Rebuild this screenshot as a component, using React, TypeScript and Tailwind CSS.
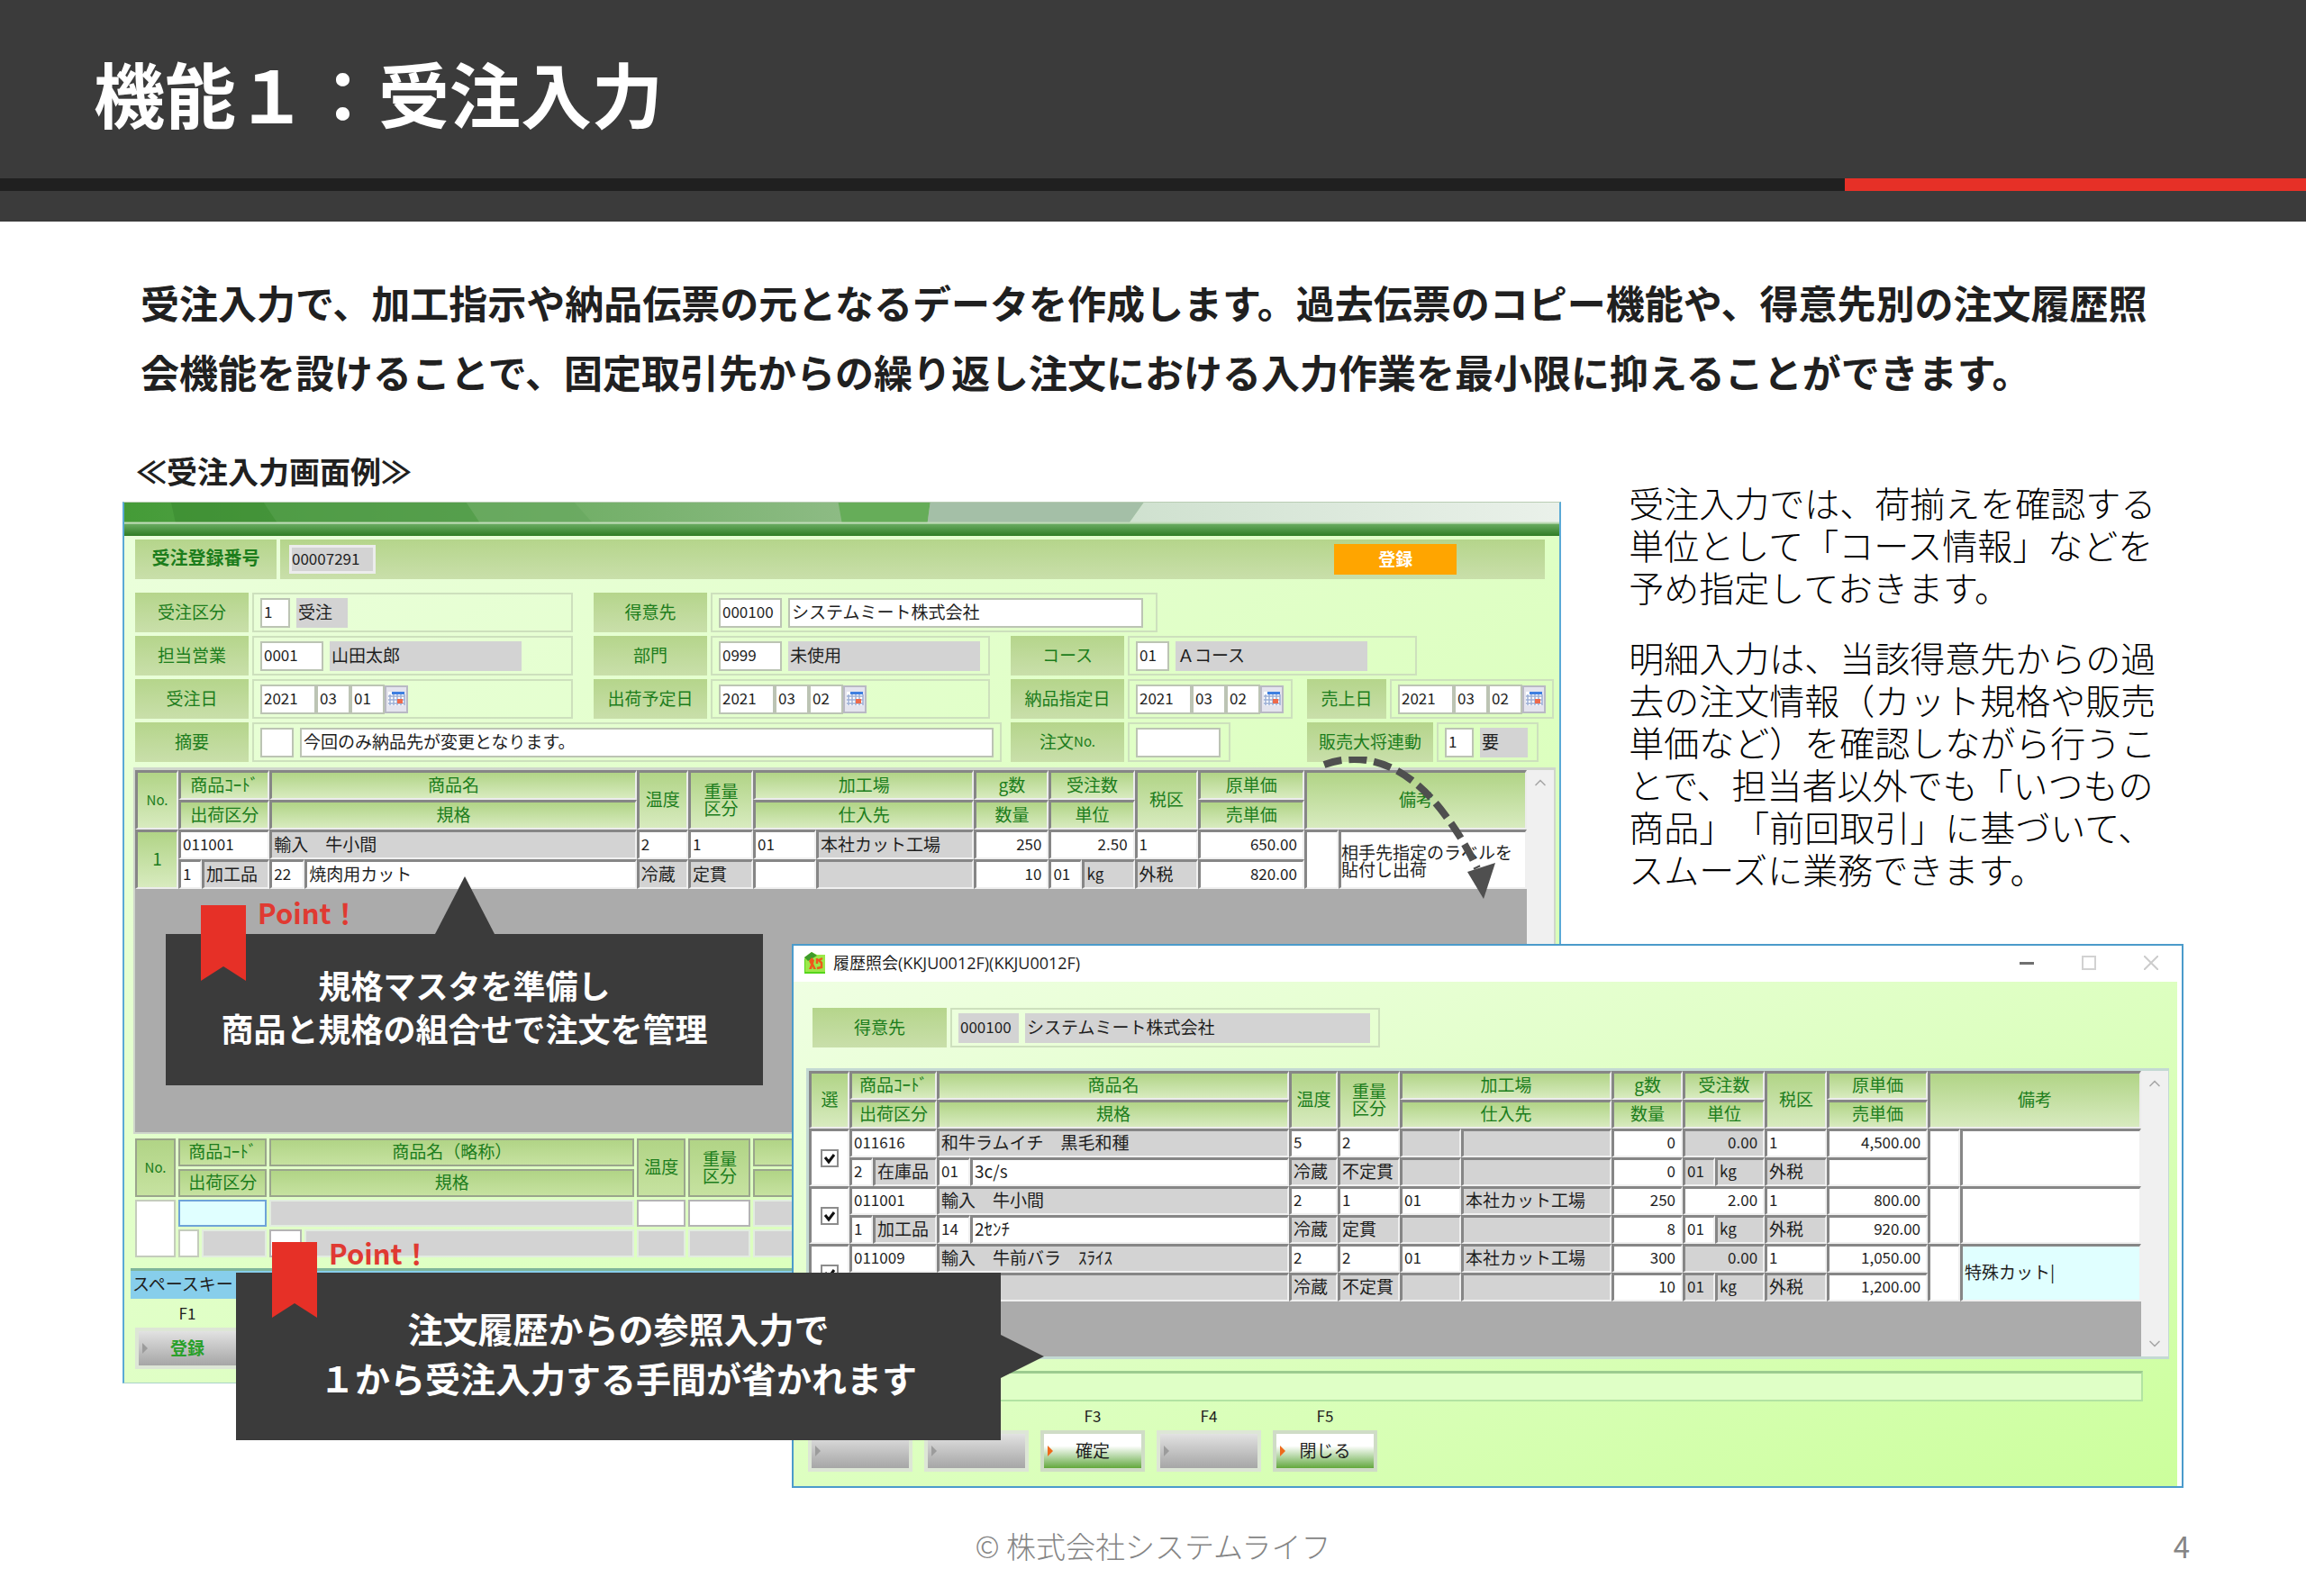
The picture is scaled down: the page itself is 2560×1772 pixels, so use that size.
import type { ReactNode } from "react";
import clsx from "clsx";
import { ChevronDown, ChevronUp } from "lucide-react";

type OrderLine = {
  code: string;
  name: string;
  shipCode: string;
  shipName: string;
  specCode: string;
  specName: string;
  temp: string;
  tempName: string;
  weight: string;
  weightName: string;
  factoryCode: string;
  factory: string;
  grams: string;
  amount: string;
  qty: string;
  unitCode: string;
  unit: string;
  tax: string;
  taxName: string;
  cost: string;
  price: string;
  note: ReactNode;
  // keys of the cells that are locked and shown in grey
  locked: string[];
};

const orderLines: OrderLine[] = [
  {
    code: "011001",
    name: "輸入　牛小間",
    shipCode: "1",
    shipName: "加工品",
    specCode: "22",
    specName: "焼肉用カット",
    temp: "2",
    tempName: "冷蔵",
    weight: "1",
    weightName: "定貫",
    factoryCode: "01",
    factory: "本社カット工場",
    grams: "250",
    amount: "10",
    qty: "2.50",
    unitCode: "01",
    unit: "kg",
    tax: "1",
    taxName: "外税",
    cost: "650.00",
    price: "820.00",
    note: (
      <>
        相手先指定のラベルを
        <br />
        貼付し出荷
      </>
    ),
    locked: [],
  },
];

const historyLines: OrderLine[] = [
  {
    code: "011616",
    name: "和牛ラムイチ　黒毛和種",
    shipCode: "2",
    shipName: "在庫品",
    specCode: "01",
    specName: "3c/s",
    temp: "5",
    tempName: "冷蔵",
    weight: "2",
    weightName: "不定貫",
    factoryCode: "",
    factory: "",
    grams: "0",
    amount: "0",
    qty: "0.00",
    unitCode: "01",
    unit: "kg",
    tax: "1",
    taxName: "外税",
    cost: "4,500.00",
    price: "",
    note: "",
    locked: ["factoryCode", "supplierCode", "qty", "unitCode"],
  },
  {
    code: "011001",
    name: "輸入　牛小間",
    shipCode: "1",
    shipName: "加工品",
    specCode: "14",
    specName: "2ｾﾝﾁ",
    temp: "2",
    tempName: "冷蔵",
    weight: "1",
    weightName: "定貫",
    factoryCode: "01",
    factory: "本社カット工場",
    grams: "250",
    amount: "8",
    qty: "2.00",
    unitCode: "01",
    unit: "kg",
    tax: "1",
    taxName: "外税",
    cost: "800.00",
    price: "920.00",
    note: "",
    locked: ["supplierCode"],
  },
  {
    code: "011009",
    name: "輸入　牛前バラ　ｽﾗｲｽ",
    shipCode: "",
    shipName: "",
    specCode: "",
    specName: "",
    temp: "2",
    tempName: "冷蔵",
    weight: "2",
    weightName: "不定貫",
    factoryCode: "01",
    factory: "本社カット工場",
    grams: "300",
    amount: "10",
    qty: "0.00",
    unitCode: "01",
    unit: "kg",
    tax: "1",
    taxName: "外税",
    cost: "1,050.00",
    price: "1,200.00",
    note: (
      <input
        aria-label="備考"
        defaultValue="特殊カット|"
        className="h-full w-full bg-[#e0ffff] px-0.5 pb-1 text-[19px] outline-none"
      />
    ),
    locked: ["supplierCode", "specCode", "specName", "qty", "unitCode"],
  },
];

const orderCols = [48, 26, 75, 39, 368, 57, 72, 70, 175, 83, 37, 58, 70, 118, 38, 209];
const historyCols = [45, 26, 71, 37, 354, 54, 69, 68, 167, 79, 36, 55, 69, 112, 36, 201];

function Cols({ widths, less = 0 }: { widths: number[]; less?: number }) {
  return (
    <colgroup>
      {widths.map((w, i) => (
        <col key={i} style={{ width: w - less }} />
      ))}
    </colgroup>
  );
}

function HeadCell({
  children,
  flat,
  ...span
}: {
  children?: ReactNode;
  flat?: boolean;
  colSpan?: number;
  rowSpan?: number;
}) {
  return (
    <th
      {...span}
      className={clsx(
        "overflow-hidden bg-linear-to-b from-[#b1d486] px-0 pt-0 pb-1 text-center align-middle text-[19px] leading-[19px] font-normal whitespace-nowrap text-[#1c7d1c]",
        flat
          ? "to-[#c6e2a0] border-2 border-[#9aa58c]"
          : "to-[#d8ebbf] border-t-3 border-r-2 border-b-2 border-l-3 border-t-[#868686] border-r-[#ececec] border-b-[#ececec] border-l-[#868686]",
      )}
    >
      {children}
    </th>
  );
}

function GridHead({
  first,
  name = "商品名",
  height,
  flat,
}: {
  first: ReactNode;
  name?: string;
  height: string;
  flat?: boolean;
}) {
  return (
    <thead>
      <tr className={height}>
        <HeadCell flat={flat} rowSpan={2}>{first}</HeadCell>
        <HeadCell flat={flat} colSpan={2}>商品ｺｰﾄﾞ</HeadCell>
        <HeadCell flat={flat} colSpan={2}>{name}</HeadCell>
        <HeadCell flat={flat} rowSpan={2}>温度</HeadCell>
        <HeadCell flat={flat} rowSpan={2}>
          重量
          <br />
          区分
        </HeadCell>
        <HeadCell flat={flat} colSpan={2}>{!flat && "加工場"}</HeadCell>
        <HeadCell flat={flat}>{!flat && "g数"}</HeadCell>
        <HeadCell flat={flat} colSpan={2}>{!flat && "受注数"}</HeadCell>
        <HeadCell flat={flat} rowSpan={2}>{!flat && "税区"}</HeadCell>
        <HeadCell flat={flat}>{!flat && "原単価"}</HeadCell>
        <HeadCell flat={flat} rowSpan={2} colSpan={2}>{!flat && "備考"}</HeadCell>
      </tr>
      <tr className={height}>
        <HeadCell flat={flat} colSpan={2}>出荷区分</HeadCell>
        <HeadCell flat={flat} colSpan={2}>規格</HeadCell>
        <HeadCell flat={flat} colSpan={2}>{!flat && "仕入先"}</HeadCell>
        <HeadCell flat={flat}>{!flat && "数量"}</HeadCell>
        <HeadCell flat={flat} colSpan={2}>{!flat && "単位"}</HeadCell>
        <HeadCell flat={flat}>{!flat && "売単価"}</HeadCell>
      </tr>
    </thead>
  );
}

function Cell({
  children,
  grey,
  num,
  right,
  pad = "px-0.5 pb-1",
  ...span
}: {
  children?: ReactNode;
  grey?: boolean;
  num?: boolean;
  right?: boolean;
  pad?: string;
  colSpan?: number;
  rowSpan?: number;
}) {
  return (
    <td
      {...span}
      className={clsx(
        "overflow-hidden border-t-3 border-r-2 border-b-2 border-l-3 border-t-[#868686] border-r-[#f0f0f0] border-b-[#f0f0f0] border-l-[#868686] pt-0 align-middle leading-[19px] whitespace-nowrap",
        right ? "pr-1.5 pb-1 text-right" : pad,
        grey ? "bg-[#d3d3d3]" : "bg-white",
        num ? "text-[17px]" : "text-[19px]",
      )}
    >
      {children}
    </td>
  );
}

function LineRows({ line, head, height }: { line: OrderLine; head: ReactNode; height: string }) {
  const locked = (key: string) => line.locked.includes(key);
  return (
    <>
      <tr className={height}>
        {head}
        <Cell num colSpan={2}>{line.code}</Cell>
        <Cell grey colSpan={2}>{line.name}</Cell>
        <Cell num>{line.temp}</Cell>
        <Cell num>{line.weight}</Cell>
        <Cell num grey={locked("factoryCode")}>{line.factoryCode}</Cell>
        <Cell grey>{line.factory}</Cell>
        <Cell num right>{line.grams}</Cell>
        <Cell num right grey={locked("qty")} colSpan={2}>{line.qty}</Cell>
        <Cell num>{line.tax}</Cell>
        <Cell num right>{line.cost}</Cell>
        <Cell rowSpan={2} />
        <Cell rowSpan={2} pad="px-0 h-px">{line.note}</Cell>
      </tr>
      <tr className={height}>
        <Cell num>{line.shipCode}</Cell>
        <Cell grey>{line.shipName}</Cell>
        <Cell num grey={locked("specCode")}>{line.specCode}</Cell>
        <Cell grey={locked("specName")}>{line.specName}</Cell>
        <Cell grey>{line.tempName}</Cell>
        <Cell grey>{line.weightName}</Cell>
        <Cell grey={locked("supplierCode")} />
        <Cell grey />
        <Cell num right>{line.amount}</Cell>
        <Cell num grey={locked("unitCode")}>{line.unitCode}</Cell>
        <Cell num grey>{line.unit}</Cell>
        <Cell grey>{line.taxName}</Cell>
        <Cell num right>{line.price}</Cell>
      </tr>
    </>
  );
}

function ScrollBar({ down }: { down?: boolean }) {
  return (
    <div className="flex w-[30px] shrink-0 flex-col items-center justify-between bg-[#f0f0f0] py-1">
      <ChevronUp className="size-5 text-[#a8a8a8]" />
      {down && <ChevronDown className="size-5 text-[#a8a8a8]" />}
    </div>
  );
}

function Caption({ children, htmlFor, width }: { children: ReactNode; htmlFor: string; width: string }) {
  return (
    <label
      htmlFor={htmlFor}
      className={clsx(
        "flex h-[44px] shrink-0 items-center justify-center bg-linear-to-b from-[#b5d58b] to-[#c9dfaa] pb-1 text-[19px] leading-[19px] whitespace-nowrap text-[#1c7d1c]",
        width,
      )}
    >
      {children}
    </label>
  );
}

function Field({ children, width }: { children: ReactNode; width: string }) {
  return (
    <div
      className={clsx(
        "ml-1 flex h-[44px] shrink-0 items-center gap-[7px] border-2 border-[#cde0bd] pl-[7px]",
        width,
      )}
    >
      {children}
    </div>
  );
}

function Box({
  id,
  value = "",
  label,
  width,
  grey,
  text,
}: {
  id?: string;
  value?: string;
  label?: string;
  width: string;
  grey?: boolean;
  text?: boolean;
}) {
  return (
    <input
      id={id}
      aria-label={label}
      defaultValue={value}
      readOnly={grey}
      className={clsx(
        "h-[33px] shrink-0 rounded-none pb-1 outline-none",
        width,
        grey ? "bg-[#d3d3d3] px-0.5" : "border-2 border-[#bcc4b4] bg-white px-0.5",
        text ? "text-[19px]" : "text-[17px]",
      )}
    />
  );
}

function DateBox({ id, day }: { id: string; day: string }) {
  return (
    <div className="flex items-center">
      <Box id={id} value="2021" width="w-[62px]" />
      <Box value="03" label="月" width="w-[38px]" />
      <Box value={day} label="日" width="w-[38px]" />
      <button
        type="button"
        aria-label="カレンダー"
        className="flex h-[31px] w-[26px] items-center justify-center border-2 border-[#b9b9c4] bg-[#e4e4ee]"
      >
        <svg viewBox="0 0 20 20" className="size-5">
          <rect x="1" y="2" width="18" height="15" fill="#fff" />
          <rect x="5" y="2" width="14" height="3" fill="#3f7fe0" />
          <path d="M1 7H19M1 11H19M1 15H19M3 5V17M7 5V17M11 5V17M15 5V17M19 5V17" stroke="#9db0d6" strokeWidth="1.5" />
          <rect x="11" y="10" width="6" height="5" fill="#ee6a4c" />
        </svg>
      </button>
    </div>
  );
}

function KeyButton({
  keyName,
  hint,
  label,
  tone,
}: {
  keyName?: string;
  hint?: string;
  label?: string;
  tone: "grey" | "green" | "greyGreen";
}) {
  return (
    <div className="flex w-[116px] flex-col items-center gap-1">
      <span className="h-[24px] text-[17px] leading-[24px]">{keyName}</span>
      <button
        type="button"
        aria-label={label ?? hint ?? keyName}
        className={clsx(
          "relative h-[46px] w-full border-4 pb-1 text-[19px] leading-[19px]",
          tone === "green"
            ? "border-[#cfdcc6] bg-linear-to-b from-white from-35% to-[#63a83a]"
            : "border-[#dde6d6] bg-linear-to-b from-[#e2e2e2] to-[#a6a6a6]",
          tone === "greyGreen" && "font-bold text-[#2aa02a]",
        )}
      >
        <svg viewBox="0 0 6 12" className="absolute top-[13px] left-1 h-3 w-1.5">
          <path d="M0 0L6 6L0 12Z" fill={tone === "green" ? "#ee6a1c" : "#9c9c9c"} />
        </svg>
        {label}
      </button>
    </div>
  );
}

function TitleBanner() {
  return (
    <svg viewBox="0 0 1594 36" preserveAspectRatio="none" className="h-[37px] w-full">
      <defs>
        <linearGradient id="left" x1="0" x2="1" y1="0" y2="0">
          <stop offset="0" stopColor="#449b37" />
          <stop offset=".5" stopColor="#8dbb84" />
        </linearGradient>
        <linearGradient id="right" x1="0" x2="1" y1="0" y2="0">
          <stop offset="0" stopColor="#cfe1cf" />
          <stop offset="1" stopColor="#eaf1ea" />
        </linearGradient>
        <linearGradient id="rule" x1="0" x2="0" y1="0" y2="1">
          <stop offset="0" stopColor="#6aac62" />
          <stop offset="1" stopColor="#2f7d24" />
        </linearGradient>
      </defs>
      <rect width="1594" height="36" fill="url(#left)" />
      <path d="M52 0H155L170 22H57Z" fill="#3b8a30" opacity=".6" />
      <path d="M155 0H380L395 22H170Z" fill="#4f9a46" opacity=".7" />
      <path d="M380 0H500L520 22H395Z" fill="#68a860" opacity=".7" />
      <path d="M793 0H895L892 22H797Z" fill="#66ad59" />
      <path d="M895 0H1132L1116 22H892Z" fill="#a4bfa7" />
      <path d="M1132 0H1594V22H1116Z" fill="url(#right)" />
      <rect y="21" width="1594" height="3" fill="#c0dcb8" />
      <rect y="23" width="1594" height="13" fill="url(#rule)" />
    </svg>
  );
}

function OrderWindow() {
  return (
    <section className="border-x-2 border-t border-b border-x-[#5aa9d6] border-t-[#b9cdb4] border-b-[#a9d3c8] bg-linear-to-br from-[#ebffdc] to-[#d4ffae] pb-[15px] text-[#1e1e1e]">
      <TitleBanner />

      <div className="mt-[4px] mr-[16px] ml-[12px] flex h-[44px] items-center gap-1">
        <label
          htmlFor="order-no"
          className="flex h-full w-[157px] items-center justify-center bg-linear-to-b from-[#b5d58b] to-[#c9dfaa] pb-1 text-[20px] leading-[20px] font-bold text-[#1c7d1c]"
        >
          受注登録番号
        </label>
        <div className="flex h-full grow items-center bg-linear-to-b from-[#b5d58b] to-[#c9dfaa] pr-[98px] pl-[10px]">
          <input
            id="order-no"
            readOnly
            defaultValue="00007291"
            className="h-[32px] w-[96px] border-3 border-[#ececec] bg-[#d3d3d3] pb-1 text-[17px] outline-none"
          />
          <button
            type="button"
            className="ml-auto h-[34px] w-[136px] bg-[#ffa500] pb-1 text-[19px] leading-[19px] font-bold text-white"
          >
            登録
          </button>
        </div>
      </div>

      <div className="mt-[15px] ml-[12px] flex flex-col gap-1">
        <div className="flex">
          <Caption htmlFor="kind" width="w-[126px]">受注区分</Caption>
          <Field width="w-[356px]">
            <Box id="kind" value="1" width="w-[33px]" />
            <Box value="受注" label="受注区分名" width="w-[57px]" grey text />
          </Field>
          <div className="w-[23px]" />
          <Caption htmlFor="customer" width="w-[126px]">得意先</Caption>
          <Field width="w-[496px]">
            <Box id="customer" value="000100" width="w-[70px]" />
            <Box value="システムミート株式会社" label="得意先名" width="w-[394px]" text />
          </Field>
        </div>

        <div className="flex">
          <Caption htmlFor="staff" width="w-[126px]">担当営業</Caption>
          <Field width="w-[356px]">
            <Box id="staff" value="0001" width="w-[70px]" />
            <Box value="山田太郎" label="担当営業名" width="w-[213px]" grey text />
          </Field>
          <div className="w-[23px]" />
          <Caption htmlFor="dept" width="w-[126px]">部門</Caption>
          <Field width="w-[310px]">
            <Box id="dept" value="0999" width="w-[70px]" />
            <Box value="未使用" label="部門名" width="w-[213px]" grey text />
          </Field>
          <div className="w-[23px]" />
          <Caption htmlFor="course" width="w-[126px]">コース</Caption>
          <Field width="w-[321px]">
            <Box id="course" value="01" width="w-[37px]" />
            <Box value="Ａコース" label="コース名" width="w-[213px]" grey text />
          </Field>
        </div>

        <div className="flex">
          <Caption htmlFor="order-date" width="w-[126px]">受注日</Caption>
          <Field width="w-[356px]">
            <DateBox id="order-date" day="01" />
          </Field>
          <div className="w-[23px]" />
          <Caption htmlFor="ship-date" width="w-[126px]">出荷予定日</Caption>
          <Field width="w-[310px]">
            <DateBox id="ship-date" day="02" />
          </Field>
          <div className="w-[23px]" />
          <Caption htmlFor="due-date" width="w-[126px]">納品指定日</Caption>
          <Field width="w-[183px]">
            <DateBox id="due-date" day="02" />
          </Field>
          <div className="w-[16px]" />
          <Caption htmlFor="sales-date" width="w-[88px]">売上日</Caption>
          <Field width="w-[182px]">
            <DateBox id="sales-date" day="02" />
          </Field>
        </div>

        <div className="flex">
          <Caption htmlFor="memo" width="w-[126px]">摘要</Caption>
          <Field width="w-[832px]">
            <Box id="memo" width="w-[37px]" />
            <Box value="今回のみ納品先が変更となります。" label="摘要内容" width="w-[770px]" text />
          </Field>
          <div className="w-[10px]" />
          <Caption htmlFor="slip-no" width="w-[126px]">
            注文<span className="text-[15px]">No.</span>
          </Caption>
          <Field width="w-[114px]">
            <Box id="slip-no" width="w-[94px]" />
          </Field>
          <div className="w-[85px]" />
          <Caption htmlFor="link" width="w-[140px]">販売大将連動</Caption>
          <Field width="w-[113px]">
            <Box id="link" value="1" width="w-[32px]" />
            <Box value="要" label="連動区分" width="w-[53px]" grey text />
          </Field>
        </div>
      </div>

      <div className="mt-[6px] mr-[4px] ml-[10px] flex h-[407px] border-2 border-t-3 border-[#cfd6cb] bg-[#ababab]">
        <div className="grow">
          <table className="w-full table-fixed border-separate border-spacing-0">
            <Cols widths={orderCols} />
            <GridHead first={<span className="text-[15px]">No.</span>} height="h-[33px]" />
            <tbody>
              {orderLines.map((line, i) => (
                <LineRows
                  key={i}
                  line={line}
                  height="h-[33px]"
                  head={<HeadCell rowSpan={2}>{i + 1}</HeadCell>}
                />
              ))}
            </tbody>
          </table>
        </div>
        <ScrollBar />
      </div>

      <div className="mt-[2px] mr-[35px] ml-[9px]">
        <table className="w-full table-fixed border-separate border-spacing-[3px]">
          <Cols widths={orderCols} less={3} />
          <GridHead
            flat
            first={<span className="text-[15px]">No.</span>}
            name="商品名（略称）"
            height="h-[31px]"
          />
          <tbody>
            <tr className="h-[30px]">
              <td rowSpan={2} className="border-2 border-[#c4ccbc] bg-white" />
              <td colSpan={2} className="border-2 border-[#6ea3d8] bg-[#e0ffff] p-0">
                <input aria-label="商品コード" className="h-[26px] w-full px-1 text-[17px] outline-none" />
              </td>
              <td colSpan={2} className="border-2 border-[#e2ece0] bg-[#d3d3d3]" />
              <td className="border-2 border-[#b4b4b4] bg-white" />
              <td className="border-2 border-[#b4b4b4] bg-white" />
              <td colSpan={2} className="border-2 border-[#e2ece0] bg-[#d3d3d3]" />
              <td colSpan={7} className="bg-white" />
            </tr>
            <tr className="h-[31px]">
              <td className="border-2 border-[#c4ccbc] bg-white" />
              <td className="border-2 border-[#e2ece0] bg-[#d3d3d3]" />
              <td className="border-2 border-[#b4b4b4] bg-white" />
              <td className="border-2 border-[#e2ece0] bg-[#d3d3d3]" />
              <td className="border-2 border-[#e2ece0] bg-[#d3d3d3]" />
              <td className="border-2 border-[#e2ece0] bg-[#d3d3d3]" />
              <td colSpan={2} className="border-2 border-[#e2ece0] bg-[#d3d3d3]" />
              <td colSpan={7} className="bg-white" />
            </tr>
          </tbody>
        </table>
      </div>

      <p className="mt-[9px] mr-[10px] ml-[7px] flex h-[34px] items-center border-t-3 border-t-[#7fb59a] bg-[#87ceeb] px-0.5 pb-1 text-[19px] leading-[19px]">
        スペースキー
      </p>
      <div className="mt-[4px] ml-[12px]">
        <KeyButton keyName="F1" label="登録" tone="greyGreen" />
      </div>
    </section>
  );
}

function HistoryWindow() {
  return (
    <section className="flex h-[604px] flex-col border-2 border-[#4b9bcb] bg-white text-[#1e1e1e]">
      <header className="flex h-[40px] shrink-0 items-center pr-[26px] pb-[2px] pl-[12px]">
        <svg viewBox="0 0 24 24" className="size-6">
          <path d="M0 6L8 0L14 3H23V23H0Z" fill="#9be84a" />
          <path d="M0 6L8 0L14 4L4 10Z" fill="#3f9a2c" />
          <path d="M0 8V23H23" stroke="#55d61c" strokeWidth="2" fill="none" />
          <path d="M5 19L7 14L5 10L8 6L11 9L10 13L13 19H10L9 16L8 19Z" fill="#ee5a1c" />
          <path d="M14 7V13M20 7L16 9L19 12V17L14 18" stroke="#ee5a1c" strokeWidth="2.5" fill="none" />
        </svg>
        <h2 className="ml-2 font-['Open_Sans','Noto_Sans_CJK_JP',sans-serif] text-[18px] whitespace-nowrap">
          履歴照会(KKJU0012F)(KKJU0012F)
        </h2>
        <div className="ml-auto flex items-center gap-[53px]">
          <button type="button" aria-label="最小化" className="h-[3px] w-[16px] bg-[#707070]" />
          <button type="button" aria-label="最大化" className="size-[16px] border-2 border-[#d2d2d2]" />
          <button type="button" aria-label="閉じる">
            <svg viewBox="0 0 16 16" className="size-4">
              <path d="M0 0L16 16M16 0L0 16" stroke="#cccccc" strokeWidth="2" />
            </svg>
          </button>
        </div>
      </header>

      <div className="mr-[5px] flex grow flex-col bg-linear-to-br from-[#efffe2] via-[#ddffc0] to-[#ccff9c] px-[14px] pt-[29px]">
        <div className="flex pl-[7px]">
          <Caption htmlFor="history-customer" width="w-[149px]">得意先</Caption>
          <Field width="w-[477px]">
            <Box id="history-customer" value="000100" width="w-[67px]" grey />
            <Box value="システムミート株式会社" label="得意先名" width="w-[383px]" grey text />
          </Field>
        </div>

        <div className="mt-[23px] mr-[-5px] flex h-[323px] shrink-0 border-3 border-[#c3d9d3] bg-[#ababab]">
          <div className="grow">
            <table className="w-full table-fixed border-separate border-spacing-0">
              <Cols widths={historyCols} />
              <GridHead first="選" height="h-[32px]" />
              <tbody>
                {historyLines.map((line, i) => (
                  <LineRows
                    key={i}
                    line={line}
                    height="h-[32px]"
                    head={
                      <Cell rowSpan={2} pad="px-0">
                        <label className="mx-auto grid size-5">
                          <input
                            type="checkbox"
                            defaultChecked
                            aria-label={`${line.code}を選択`}
                            className="peer col-start-1 row-start-1 size-5 appearance-none border-2 border-[#8c8c8c] bg-white"
                          />
                          <svg
                            viewBox="0 0 20 20"
                            className="invisible col-start-1 row-start-1 size-5 peer-checked:visible"
                          >
                            <path d="M5 9L9 14L15 6" stroke="#111" strokeWidth="3" fill="none" />
                          </svg>
                        </label>
                      </Cell>
                    }
                  />
                ))}
              </tbody>
            </table>
          </div>
          <ScrollBar down />
        </div>

        <div className="mt-[13px] mr-[24px] h-[34px] shrink-0 border-2 border-t-3 border-[#b2e3a2] border-t-[#9ccb8f] bg-[#dfffc6]" />

        <div className="mt-[4px] flex gap-[13px] pl-[2px]">
          <KeyButton hint="F1" tone="grey" />
          <KeyButton hint="F2" tone="grey" />
          <KeyButton keyName="F3" label="確定" tone="green" />
          <KeyButton keyName="F4" tone="grey" />
          <KeyButton keyName="F5" label="閉じる" tone="green" />
        </div>
      </div>
    </section>
  );
}

function Bookmark() {
  return (
    <svg viewBox="0 0 50 84" className="h-[84px] w-[50px]">
      <path d="M0 0H50V84L25 68L0 84Z" fill="#e63027" />
    </svg>
  );
}

export default function App() {
  return (
    <div className="flex min-h-screen flex-col bg-white font-['Noto_Sans_CJK_JP',sans-serif] text-[#202020] [text-spacing-trim:space-all]">
      <header className="bg-[#3b3b3b] pb-[34px]">
        <h1 className="flex h-[198px] items-center pt-[8px] pl-[104px] text-[79px] leading-[100px] font-bold text-white">
          機能１：受注入力
        </h1>
        <div className="flex h-[14px] justify-end bg-[#202020]">
          <div className="w-1/5 bg-[#e63027]" />
        </div>
      </header>

      <p className="mx-[156px] mt-[51px] text-[43px] leading-[77px] font-bold">
        受注入力で、加工指示や納品伝票の元となるデータを作成します。過去伝票のコピー機能や、得意先別の注文履歴照会機能を設けることで、固定取引先からの繰り返し注文における入力作業を最小限に抑えることができます。
      </p>

      <main className="relative mx-[136px] mt-[52px] grid grid-cols-[1598fr_691fr] pb-[115px]">
        <div className="min-w-0">
          <h2 className="h-[54px] pl-[15px] text-[34px] leading-[40px] font-bold">≪受注入力画面例≫</h2>
          <OrderWindow />
        </div>

        <aside className="flex flex-col gap-[31px] pt-[31px] pr-[24px] pl-[75px] text-[39px] leading-[47px] font-light text-black">
          <p>受注入力では、荷揃えを確認する単位として「コース情報」などを予め指定しておきます。</p>
          <p>
            明細入力は、当該得意先からの過去の注文情報（カット規格や販売単価など）を確認しながら行うことで、担当者以外でも「いつもの商品」「前回取引」に基づいて、スムーズに業務できます。
          </p>
        </aside>

        {/* copy arrow from the linked setting down to the remarks column */}
        <svg viewBox="0 0 200 164" className="absolute top-[337px] left-[1330px] h-[164px] w-[200px]">
          <path
            d="M4 9C45 -6 92 6 133 58C150 80 160 96 174 124"
            stroke="#4f4f4f"
            strokeWidth="8"
            strokeDasharray="20 8"
            fill="none"
          />
          <path d="M163 128L194 118L181 158Z" fill="#4f4f4f" />
        </svg>

        <div className="absolute top-[545px] right-0 left-[743px]">
          <HistoryWindow />
        </div>

        <div className="absolute top-[534px] left-[48px] flex h-[168px] w-[663px] items-center justify-center bg-[#3b3b3b] pb-2 text-center text-[36px] leading-[48px] font-bold text-white">
          <svg viewBox="0 0 66 64" className="absolute bottom-full left-[299px] h-[64px] w-[66px]">
            <path d="M33 0L66 64H0Z" fill="#3b3b3b" />
          </svg>
          <div className="absolute top-[-32px] left-[39px] flex gap-[13px]">
            <Bookmark />
            <span className="h-[16px] text-[31px] leading-[16px] text-[#e03a32]">Point！</span>
          </div>
          <p>
            規格マスタを準備し
            <br />
            商品と規格の組合せで注文を管理
          </p>
        </div>

        <div className="absolute top-[910px] left-[126px] flex h-[186px] w-[849px] items-center justify-center bg-[#3b3b3b] pb-2 text-center text-[39px] leading-[55px] font-bold text-white">
          <svg viewBox="0 0 48 48" className="absolute top-[69px] left-full size-12">
            <path d="M0 0L48 24L0 48Z" fill="#3b3b3b" />
          </svg>
          <div className="absolute top-[-34px] left-[40px] flex gap-[13px]">
            <Bookmark />
            <span className="h-[24px] text-[31px] leading-[24px] text-[#e03a32]">Point！</span>
          </div>
          <p>
            注文履歴からの参照入力で
            <br />
            １から受注入力する手間が省かれます
          </p>
        </div>
      </main>

      <footer className="grid grid-cols-[1fr_auto_1fr] items-center px-[129px] pt-[40px] pb-[27px] text-[33px] leading-[50px] font-light text-[#858585]">
        <span />
        <span>© 株式会社システムライフ</span>
        <span className="text-right font-normal">4</span>
      </footer>
    </div>
  );
}
